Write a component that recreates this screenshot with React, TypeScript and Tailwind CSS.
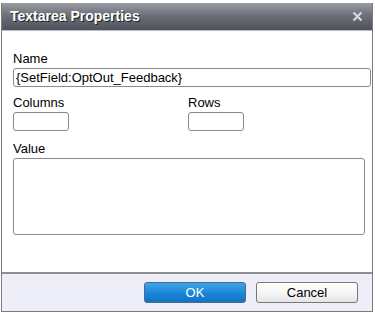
export default function App() {
  return (
    <div className="h-[314px] w-[375px] bg-white pt-[3px] font-['Liberation_Sans',Arial,sans-serif] text-[13px] text-black">
      <div className="ml-[1px] flex h-[309px] w-[372px] flex-col border-x border-b border-[#7b7b7b]">
        <div className="flex h-[28px] shrink-0 items-center justify-between border-b border-[#b9bcc4] bg-[linear-gradient(#9a9ca4,#6e7079_45%,#50525b)] pl-[8px] pr-[8px]">
          <span className="text-[14px] font-bold text-white [text-shadow:1px_1px_0_#222]">
            Textarea Properties
          </span>
          <svg width="11" height="11" viewBox="0 0 11 11" className="mr-[1px]">
            <path d="M1.5 1.5 L9.5 9.5 M9.5 1.5 L1.5 9.5" stroke="#d8d9de" strokeWidth="2.2" />
          </svg>
        </div>
        <div className="flex grow flex-col px-[11px] pt-[21px]">
          <label className="block leading-[14px]">Name</label>
          <div className="mt-[2px] flex h-[19px] w-[358px] items-center rounded-[3px] border border-[#8a8a8a] px-[2px] leading-none">
            {'{SetField:OptOut_Feedback}'}
          </div>
          <div className="mt-[9px] flex">
            <div className="w-[175px]">
              <label className="block leading-[14px]">Columns</label>
              <div className="mt-[2px] h-[19px] w-[56px] rounded-[3px] border border-[#8a8a8a]" />
            </div>
            <div>
              <label className="block leading-[14px]">Rows</label>
              <div className="mt-[2px] h-[19px] w-[56px] rounded-[3px] border border-[#8a8a8a]" />
            </div>
          </div>
          <label className="mt-[11px] block leading-[14px]">Value</label>
          <div className="mt-[2px] h-[77px] w-[352px] rounded-[3px] border border-[#8a8a8a]" />
        </div>
        <div className="flex h-[39px] shrink-0 items-center justify-end gap-[10px] border-t-2 border-[#8f8f8f] bg-[#eeeef8] pr-[14px]">
          <button className="h-[21px] w-[102px] rounded-[3px] border border-[#4a6a8c] bg-[linear-gradient(#3ea6ee,#1b86d6_55%,#0f74c2)] text-[13px] leading-none text-white">
            OK
          </button>
          <button className="h-[21px] w-[102px] rounded-[3px] border border-[#777] bg-[linear-gradient(#fff,#f6f6f6_50%,#e6e4e6)] text-[13px] leading-none text-black">
            Cancel
          </button>
        </div>
      </div>
    </div>
  );
}
